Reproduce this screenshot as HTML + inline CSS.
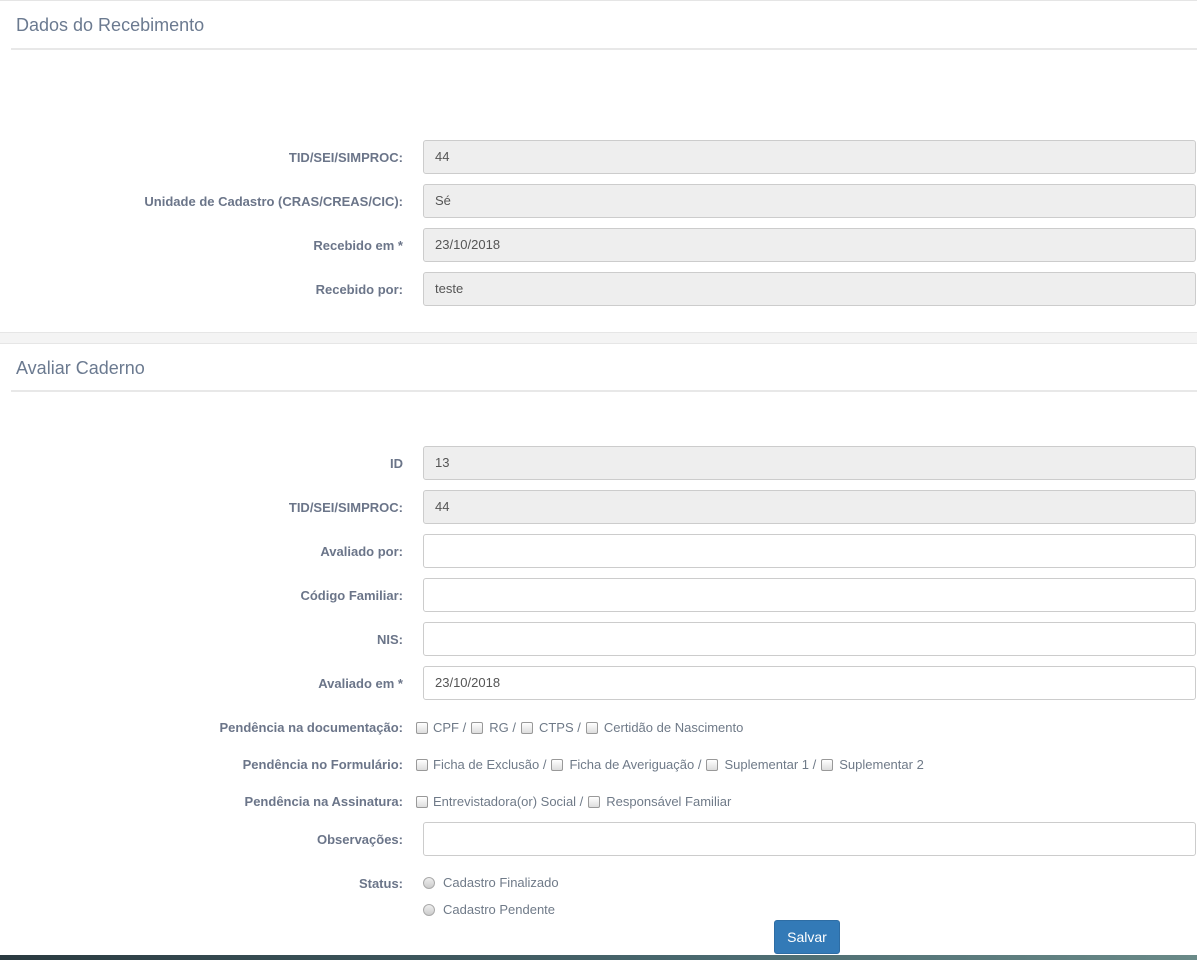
<!DOCTYPE html>
<html><head><meta charset="utf-8"><style>
*{box-sizing:border-box;margin:0;padding:0}
body{width:1197px;height:960px;background:#fff;font-family:"Liberation Sans",sans-serif;font-size:13px;color:#555;position:relative;overflow:hidden}
.abs{position:absolute}
h3{position:absolute;left:16px;font-weight:normal;font-size:18px;color:#6b7a90}
.hr{position:absolute;left:11px;right:0;height:2px;background:#e8e8e8}
.lbl{position:absolute;right:794px;font-weight:bold;color:#6b7589;font-size:13px;text-align:right;white-space:nowrap}
.inp{position:absolute;left:423px;width:773px;height:34px;border:1px solid #ccc;border-radius:3px;padding:0 11px;line-height:32px;font-size:13px;color:#555;background:#fff}
.ro{background:#eee}
.cbrow{position:absolute;left:416px;color:#6f7a88;font-size:13px;white-space:nowrap;display:flex;align-items:center}
.cb{display:inline-block;width:12px;height:12px;border:1px solid #999;border-radius:2px;background:linear-gradient(#fff,#ddd);margin:0 6px 0 0}
.cb.f{margin-right:5px}
.sp{margin-right:5px}
.rd{display:inline-block;width:12px;height:12px;border:1px solid #aaa;border-radius:50%;background:linear-gradient(#eee,#ccc);margin-right:8px}
</style></head><body>
<div class="abs" style="left:0;top:0;width:1197px;height:1px;background:#e5e5e5"></div>
<h3 style="top:15px">Dados do Recebimento</h3>
<div class="hr" style="top:48px"></div>

<div class="lbl" style="top:150px">TID/SEI/SIMPROC:</div><div class="inp ro" style="top:140px">44</div>
<div class="lbl" style="top:194px">Unidade de Cadastro (CRAS/CREAS/CIC):</div><div class="inp ro" style="top:184px">Sé</div>
<div class="lbl" style="top:238px">Recebido em *</div><div class="inp ro" style="top:228px">23/10/2018</div>
<div class="lbl" style="top:282px">Recebido por:</div><div class="inp ro" style="top:272px">teste</div>

<div class="abs" style="left:0;top:332px;width:1197px;height:12px;background:#f4f4f4;border-top:1px solid #e6e6e6;border-bottom:1px solid #e6e6e6"></div>
<h3 style="top:358px">Avaliar Caderno</h3>
<div class="hr" style="top:390px"></div>

<div class="lbl" style="top:456px">ID</div><div class="inp ro" style="top:446px">13</div>
<div class="lbl" style="top:500px">TID/SEI/SIMPROC:</div><div class="inp ro" style="top:490px">44</div>
<div class="lbl" style="top:544px">Avaliado por:</div><div class="inp" style="top:534px"></div>
<div class="lbl" style="top:588px">Código Familiar:</div><div class="inp" style="top:578px"></div>
<div class="lbl" style="top:632px">NIS:</div><div class="inp" style="top:622px"></div>
<div class="lbl" style="top:676px">Avaliado em *</div><div class="inp" style="top:666px">23/10/2018</div>

<div class="lbl" style="top:720px">Pendência na documentação:</div>
<div class="cbrow" style="top:720px"><span class="cb f"></span><span class="sp">CPF /</span><span class="cb"></span><span class="sp">RG /</span><span class="cb"></span><span class="sp">CTPS /</span><span class="cb"></span><span>Certidão de Nascimento</span></div>
<div class="lbl" style="top:757px">Pendência no Formulário:</div>
<div class="cbrow" style="top:757px"><span class="cb f"></span><span class="sp">Ficha de Exclusão /</span><span class="cb"></span><span class="sp">Ficha de Averiguação /</span><span class="cb"></span><span class="sp">Suplementar 1 /</span><span class="cb"></span><span>Suplementar 2</span></div>
<div class="lbl" style="top:794px">Pendência na Assinatura:</div>
<div class="cbrow" style="top:794px"><span class="cb f"></span><span class="sp">Entrevistadora(or) Social /</span><span class="cb"></span><span>Responsável Familiar</span></div>

<div class="lbl" style="top:832px">Observações:</div><div class="inp" style="top:822px"></div>
<div class="lbl" style="top:876px">Status:</div>
<div class="cbrow" style="top:875px;left:423px"><span class="rd"></span>Cadastro Finalizado</div>
<div class="cbrow" style="top:902px;left:423px"><span class="rd"></span>Cadastro Pendente</div>

<div class="abs" style="left:774px;top:920px;width:66px;height:34px;background:#337ab7;border:1px solid #2e6da4;border-radius:3px;color:#fff;font-size:14px;text-align:center;line-height:32px">Salvar</div>
<div class="abs" style="left:0;top:955px;width:1197px;height:5px;background:linear-gradient(90deg,#2a3a40,#4a6a70 60%,#6a8a88)"></div>
</body></html>
